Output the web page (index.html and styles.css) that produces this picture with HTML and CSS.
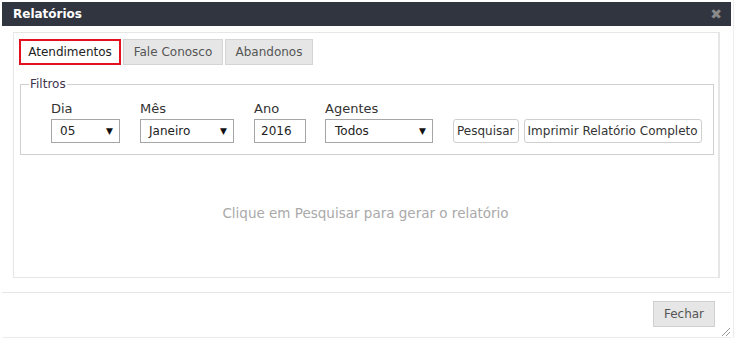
FILE: index.html
```html
<!DOCTYPE html>
<html lang="pt">
<head>
<meta charset="utf-8">
<title>Relatórios</title>
<link rel="stylesheet" href="styles.css">
</head>
<body>
<div class="dialog">
  <div class="titlebar">
    <span class="title">Relatórios</span>
    <span class="close">✖</span>
  </div>
  <div class="content">
    <div class="panel">
      <div class="tabs">
        <div class="tab active">Atendimentos</div>
        <div class="tab">Fale Conosco</div>
        <div class="tab">Abandonos</div>
      </div>
      <fieldset class="filters">
        <legend>Filtros</legend>
        <div class="field f-dia">
          <label>Dia</label>
          <div class="select"><span>05</span><span class="arrow">▼</span></div>
        </div>
        <div class="field f-mes">
          <label>Mês</label>
          <div class="select"><span>Janeiro</span><span class="arrow">▼</span></div>
        </div>
        <div class="field f-ano">
          <label>Ano</label>
          <div class="input">2016</div>
        </div>
        <div class="field f-agentes">
          <label>Agentes</label>
          <div class="select"><span>Todos</span><span class="arrow">▼</span></div>
        </div>
        <div class="buttons">
          <button class="btn">Pesquisar</button>
          <button class="btn">Imprimir Relatório Completo</button>
        </div>
      </fieldset>
      <div class="message">Clique em Pesquisar para gerar o relatório</div>
    </div>
  </div>
  <div class="footer">
    <button class="close-btn">Fechar</button>
    <span class="grip"></span>
  </div>
</div>
</body>
</html>
```

FILE: styles.css
```css
html, body {
  margin: 0;
  padding: 0;
  background: #fff;
}
body {
  font-family: "DejaVu Sans", Verdana, sans-serif;
  font-size: 12px;
  color: #333;
}
.dialog {
  position: relative;
  margin: 2px 0 0 2px;
  width: 729px;
  height: 336px;
  box-sizing: border-box;
  display: flex;
  flex-direction: column;
}
.dialog::after {
  content: "";
  position: absolute;
  left: 731px;
  top: -2px;
  width: 1px;
  height: 340px;
  background: #ececec;
}
.titlebar {
  height: 24px;
  background: #31353f;
  display: flex;
  align-items: center;
  justify-content: space-between;
  padding: 0 9px 0 11px;
}
.title {
  color: #fff;
  font-weight: bold;
  font-size: 12px;
}
.close {
  color: #8a8a8a;
  font-size: 14px;
  font-weight: bold;
  margin-top: -1px;
}
.content {
  padding: 6px 11px 0 11px;
  height: 260px;
  border-bottom: 1px solid #e6e6e6;
}
.panel {
  height: 246px;
  box-sizing: border-box;
  border: 1px solid #e6e6e6;
  border-right-width: 2px;
  padding: 6px 6px 0 5px;
  display: flex;
  flex-direction: column;
}
.tabs {
  display: flex;
  gap: 2px;
  height: 26px;
}
.tab {
  box-sizing: border-box;
  height: 26px;
  padding: 0;
  background: #e6e6e6;
  border: 1px solid #d4d4d4;
  color: #555;
  display: flex;
  align-items: center;
  justify-content: center;
  white-space: nowrap;
  font-size: 12px;
}
.tab.active {
  background: #fff;
  border: 2px solid #e3101f;
  color: #222;
  width: 102px;
}
.tab:nth-child(2) { width: 100px; }
.tab:nth-child(3) { width: 88px; }
.filters {
  margin: 12px 0 0 1px;
  width: 694px;
  height: 78px;
  box-sizing: border-box;
  border: 1px solid #cfcfcf;
  padding: 0;
  display: flex;
  align-items: flex-start;
}
.filters legend {
  padding: 0 1px;
  margin-left: 8px;
  color: #42334d;
  font-size: 12px;
}
.field {
  display: flex;
  flex-direction: column;
  margin-top: 9px;
  flex: none;
}
.field label {
  font-size: 13px;
  color: #333;
  height: 19px;
  line-height: 17px;
}
.select, .input {
  box-sizing: border-box;
  height: 24px;
  border: 1px solid #a6a6a6;
  display: flex;
  align-items: center;
  justify-content: space-between;
  font-size: 12px;
  color: #222;
  background: #fff;
}
.select { padding: 0 6px 0 8px; }
.select .arrow { font-size: 9px; color: #111; }
.f-dia { margin-left: 30px; }
.f-dia .select { width: 69px; }
.f-mes { margin-left: 20px; }
.f-mes .select { width: 94px; }
.f-ano { margin-left: 20px; }
.f-ano .input { width: 52px; padding: 0 0 0 6px; }
.f-agentes { margin-left: 19px; }
.f-agentes .select { width: 108px; padding-left: 9px; }
.buttons {
  display: flex;
  gap: 5px;
  margin: 28px 0 0 20px;
}
.btn {
  font-family: "DejaVu Sans", Verdana, sans-serif;
  font-size: 12px;
  height: 24px;
  padding: 0 3px;
  background: #fff;
  border: 1px solid #cfcfcf;
  border-radius: 3px;
  color: #333;
  white-space: nowrap;
}
.message {
  flex: 1;
  display: flex;
  align-items: center;
  justify-content: center;
  color: #a9a9a9;
  font-size: 13.5px;
  padding-bottom: 6px;
}
.footer {
  flex: 1;
  position: relative;
  display: flex;
  justify-content: flex-end;
  align-items: flex-start;
  padding: 8px 16px 0 0;
  border-bottom: 1px solid #ececec;
}
.close-btn {
  font-family: "DejaVu Sans", Verdana, sans-serif;
  font-size: 12px;
  width: 62px;
  height: 26px;
  background: #e6e6e6;
  border: 1px solid #cfcfcf;
  color: #555;
  padding: 0;
}
.grip {
  position: absolute;
  right: 1px;
  bottom: 1px;
  width: 10px;
  height: 10px;
  background: repeating-linear-gradient(135deg, transparent 0 2px, #9a9a9a 2px 3px);
  clip-path: polygon(100% 0, 100% 100%, 0 100%);
}
```
